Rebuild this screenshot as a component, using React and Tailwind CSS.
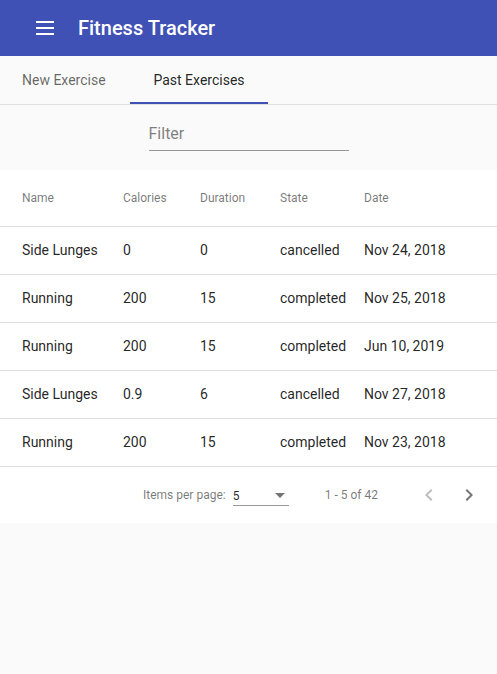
import React from 'react';

const rows = [
  { name: 'Side Lunges', calories: '0', duration: '0', state: 'cancelled', date: 'Nov 24, 2018' },
  { name: 'Running', calories: '200', duration: '15', state: 'completed', date: 'Nov 25, 2018' },
  { name: 'Running', calories: '200', duration: '15', state: 'completed', date: 'Jun 10, 2019' },
  { name: 'Side Lunges', calories: '0.9', duration: '6', state: 'cancelled', date: 'Nov 27, 2018' },
  { name: 'Running', calories: '200', duration: '15', state: 'completed', date: 'Nov 23, 2018' },
];

const cols = ['w-[123px] pl-[22px]', 'w-[77px]', 'w-[80px]', 'w-[84px]', 'flex-1'];

export default function App() {
  return (
    <div className="min-h-[674px] bg-[#fafafa] font-['Roboto',sans-serif]">
      {/* Toolbar */}
      <header className="h-14 bg-[#3f51b5] flex items-center text-white">
        <button className="ml-[36px] w-5 flex flex-col gap-[4px]">
          <span className="block h-[2px] w-[18px] bg-white" />
          <span className="block h-[2px] w-[18px] bg-white" />
          <span className="block h-[2px] w-[18px] bg-white" />
        </button>
        <h1 className="ml-[22px] text-[20px] font-medium">Fitness Tracker</h1>
      </header>

      {/* Tabs */}
      <nav className="h-[49px] flex border-b border-[#e0e0e0]">
        <div className="w-[130px] pl-[22px] flex items-center text-[14px] text-black/60 pt-[1px]">New Exercise</div>
        <div className="w-[138px] relative flex items-center justify-center text-[14px] text-black/87 pt-[1px]">
          Past Exercises
          <span className="absolute left-0 right-0 bottom-0 h-[2px] bg-[#3f51b5]" />
        </div>
      </nav>

      {/* Filter */}
      <div className="h-[65px] flex justify-center pt-[16px]">
        <div className="w-[200px] border-b border-black/40 h-[30px] flex items-start">
          <input
            placeholder="Filter"
            className="w-full bg-transparent outline-none text-[16px] placeholder:text-black/50 leading-[20px] pt-[3px]"
          />
        </div>
      </div>

      {/* Table */}
      <div className="bg-white">
        <div className="h-[57px] flex items-center border-b border-black/12 text-[12px] text-black/54">
          {['Name', 'Calories', 'Duration', 'State', 'Date'].map((h, i) => (
            <div key={h} className={cols[i]}>{h}</div>
          ))}
        </div>
        {rows.map((r, idx) => (
          <div key={idx} className="h-12 flex items-center border-b border-black/12 text-[14px] text-black/87">
            <div className={cols[0]}>{r.name}</div>
            <div className={cols[1]}>{r.calories}</div>
            <div className={cols[2]}>{r.duration}</div>
            <div className={cols[3]}>{r.state}</div>
            <div className={cols[4]}>{r.date}</div>
          </div>
        ))}

        {/* Paginator */}
        <div className="h-14 flex items-center text-[12px] text-black/54">
          <span className="ml-[143px]">Items per page:</span>
          <div className="ml-[7px] w-[56px] h-[22px] border-b border-black/40 flex items-center justify-between text-black/87 pt-[2px]">
            <span className="text-[12px]">5</span>
            <svg width="10" height="5" viewBox="0 0 10 5" className="mr-[4px]">
              <path d="M0 0 L5 5 L10 0 Z" fill="rgba(0,0,0,0.54)" />
            </svg>
          </div>
          <span className="ml-[36px]">1 - 5 of 42</span>
          <svg width="24" height="24" viewBox="0 0 24 24" className="ml-[39px]">
            <path d="M15.41 7.41L14 6l-6 6 6 6 1.41-1.41L10.83 12z" fill="rgba(0,0,0,0.26)" />
          </svg>
          <svg width="24" height="24" viewBox="0 0 24 24" className="ml-[16px]">
            <path d="M10 6L8.59 7.41 13.17 12l-4.58 4.59L10 18l6-6z" fill="rgba(0,0,0,0.54)" />
          </svg>
        </div>
      </div>
    </div>
  );
}
